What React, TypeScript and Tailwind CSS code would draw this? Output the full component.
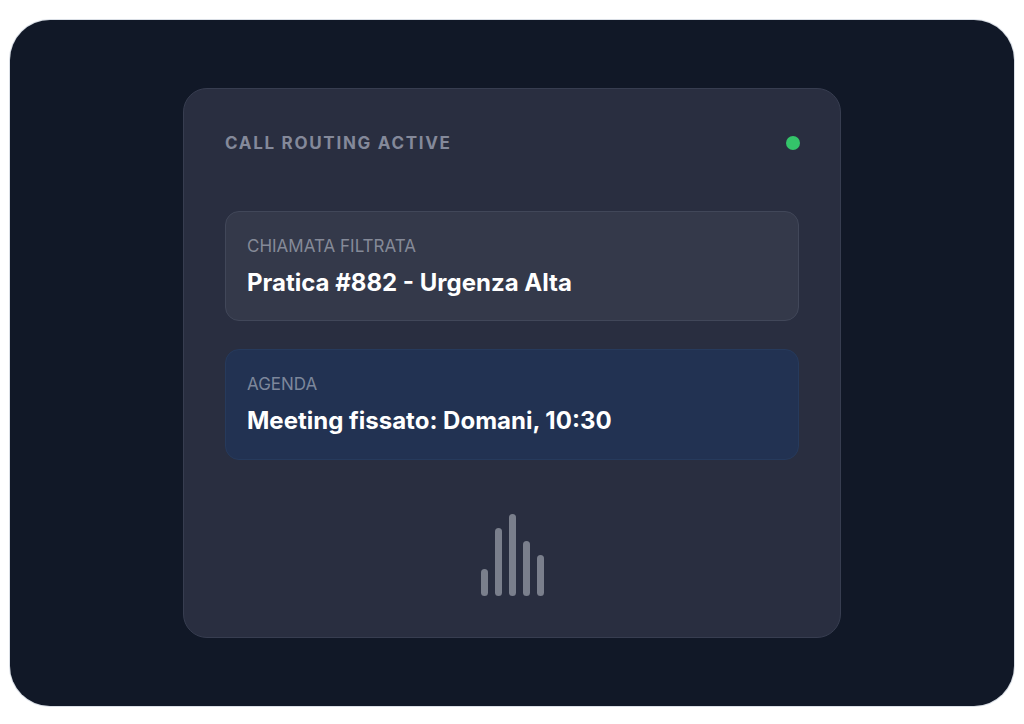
const bars = [
  { h: "h-[27px]" },
  { h: "h-[68px]" },
  { h: "h-[82px]" },
  { h: "h-[55px]" },
  { h: "h-[41px]" },
];

const App = () => {
  return (
    <div
      className="w-full h-[724px] bg-white px-[10px] pt-[20px] pb-[18px]"
      style={{ fontFamily: "Inter, 'Noto Sans', sans-serif" }}
    >
      <div className="h-full rounded-[40px] bg-[#111827] shadow-[0_0_0_1px_rgba(148,163,184,0.35)] flex items-center justify-center">
        <div className="w-[658px] h-[550px] rounded-3xl bg-[#292e40] border border-[#373d50] p-[41px] flex flex-col">
          <div className="mt-[1px] flex items-center justify-between h-6">
            <span className="text-[17px] leading-6 font-bold tracking-[0.1em] text-[#84899a]">
              CALL ROUTING ACTIVE
            </span>
            <span className="w-[14px] h-[14px] rounded-full bg-[#34c46a] -mr-[1px]" />
          </div>

          <div className="mt-[56px] rounded-[14px] bg-[#34394a] border border-[#414759] px-[21px] pt-[22px] pb-[21px]">
            <p className="text-[17px] leading-6 text-[#858a98]">CHIAMATA FILTRATA</p>
            <p className="mt-[9px] text-[24px] leading-8 font-bold text-white">
              Pratica #882 - Urgenza Alta
            </p>
          </div>

          <div className="mt-[28px] rounded-[14px] bg-[#223252] border border-[#263a5c] px-[21px] pt-[22px] pb-[22px]">
            <p className="text-[17px] leading-6 text-[#7d879b]">AGENDA</p>
            <p className="mt-[9px] text-[24px] leading-8 font-bold text-white">
              Meeting fissato: Domani, 10:30
            </p>
          </div>

          <div className="mt-auto flex items-end justify-center gap-[7px]">
            {bars.map((b, i) => (
              <div key={i} className={`w-[7px] ${b.h} rounded-full bg-[#7a7f8c]`} />
            ))}
          </div>
        </div>
      </div>
    </div>
  );
};

export default App;
